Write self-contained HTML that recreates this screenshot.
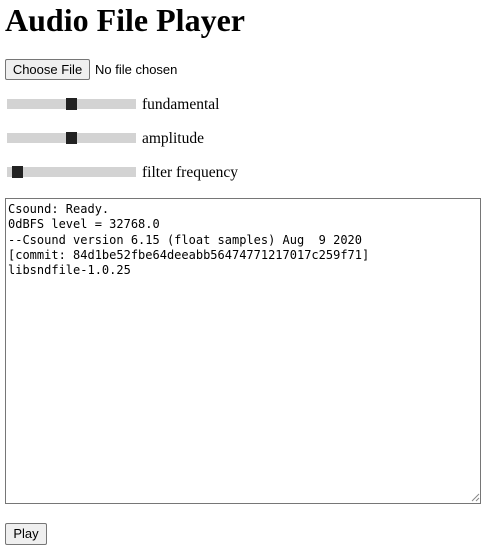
<!DOCTYPE html>
<html><head><style>
body{margin:0;width:500px;height:555px;background:#fff;position:relative;overflow:hidden;font-family:"Liberation Serif",serif;}
.a{position:absolute;}
h1{position:absolute;left:5px;top:2px;margin:0;font-size:32px;font-weight:bold;line-height:37px;}
.btn{position:absolute;background:#efefef;border:1px solid #767676;border-radius:2px;font-family:"Liberation Sans",sans-serif;font-size:13px;color:#000;box-sizing:border-box;text-align:center;}
.track{position:absolute;left:7px;width:129px;height:10px;background:#d3d3d3;}
.thumb{position:absolute;width:11px;height:12px;background:#222;top:-1px;}
.lbl{position:absolute;left:142px;font-size:15.5px;line-height:18px;}
.ta{position:absolute;left:5px;top:198px;width:476px;height:306px;border:1px solid #767676;box-sizing:border-box;font-family:"DejaVu Sans Mono","Liberation Mono",monospace;font-size:12px;line-height:15.3px;padding:3px 2px;white-space:pre;color:#000;}
</style></head><body>
<h1>Audio File Player</h1>
<div class="btn" style="left:5px;top:59px;width:85px;height:21px;line-height:19px;">Choose File</div>
<div class="a" style="left:95px;top:61px;font-family:'Liberation Sans',sans-serif;font-size:13px;line-height:17px;">No file chosen</div>
<div class="track" style="top:99px;"><div class="thumb" style="left:59px"></div></div>
<div class="lbl" style="top:96px;">fundamental</div>
<div class="track" style="top:133px;"><div class="thumb" style="left:59px"></div></div>
<div class="lbl" style="top:130px;">amplitude</div>
<div class="track" style="top:167px;"><div class="thumb" style="left:5px"></div></div>
<div class="lbl" style="top:164px;">filter frequency</div>
<div class="ta">Csound: Ready.
0dBFS level = 32768.0
--Csound version 6.15 (float samples) Aug  9 2020
[commit: 84d1be52fbe64deeabb56474771217017c259f71]
libsndfile-1.0.25</div>
<svg class="a" style="left:471px;top:493px" width="9" height="9"><path d="M8 1L1 8M8 5L5 8" stroke="#888" stroke-width="1"/></svg>
<div class="btn" style="left:5px;top:523px;width:42px;height:22px;line-height:20px;">Play</div>
</body></html>
